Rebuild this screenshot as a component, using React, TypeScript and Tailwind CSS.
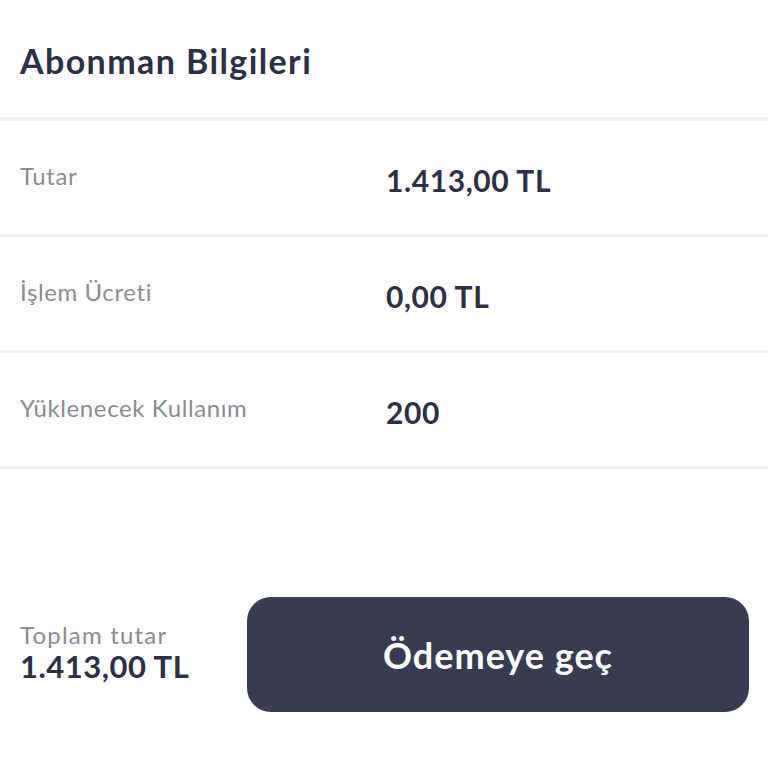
export default function App() {
  const rows = [
    { label: 'Tutar', value: '1.413,00 TL' },
    { label: 'İşlem Ücreti', value: '0,00 TL' },
    { label: 'Yüklenecek Kullanım', value: '200' },
  ];

  return (
    <div
      className="flex h-[768px] w-[768px] flex-col bg-white text-[#2d2f44]"
      style={{ fontFamily: 'Lato, "Noto Sans", sans-serif' }}
    >
      {/* Header */}
      <header className="flex h-[117px] items-center px-5 pt-[4px]">
        <h1 className="text-[34px] font-bold leading-none tracking-[1.4px]">Abonman Bilgileri</h1>
      </header>

      {/* Detail rows */}
      <div className="border-t-[4px] border-[#f3f3f5]">
        {rows.map((row) => (
          <div
            key={row.label}
            className="flex h-[116px] items-center border-b-[3px] border-[#f3f3f5] px-5"
          >
            <span className="w-[366px] pb-[4px] text-[24px] leading-none tracking-[0.6px] text-[#8b8b94]">
              {row.label}
            </span>
            <span className="pt-[4px] text-[30px] font-bold leading-none tracking-[0.6px]">{row.value}</span>
          </div>
        ))}
      </div>

      <div className="flex-1" />

      {/* Footer */}
      <footer className="mb-[56px] flex items-center pl-5 pr-[19px]">
        <div className="flex w-[227px] flex-col pb-[6px]">
          <span className="text-[24px] leading-[28px] tracking-[1.2px] text-[#8b8b94]">Toplam tutar</span>
          <span className="text-[31px] font-bold leading-[34px] tracking-[0.5px]">1.413,00 TL</span>
        </div>
        <button className="flex h-[115px] flex-1 items-center justify-center rounded-[24px] bg-[#383c52] text-[36px] font-bold tracking-[1px] text-white">
          Ödemeye geç
        </button>
      </footer>
    </div>
  );
}
